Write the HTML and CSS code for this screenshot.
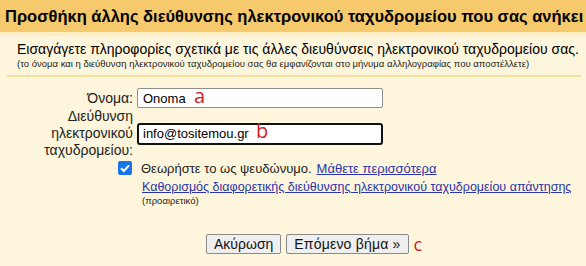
FILE: index.html
```html
<!DOCTYPE html>
<html lang="el">
<head>
    <meta charset="UTF-8">
    <title>Προσθήκη διεύθυνσης</title>
    <link rel="stylesheet" href="styles.css">
</head>
<body>
    <div class="dialog">
        <div class="dialog-title">Προσθήκη άλλης διεύθυνσης ηλεκτρονικού ταχυδρομείου που σας ανήκει</div>

        <div class="dialog-body">
            <div class="intro">
                <div class="intro-main">Εισαγάγετε πληροφορίες σχετικά με τις άλλες διευθύνσεις ηλεκτρονικού ταχυδρομείου σας.</div>
                <div class="intro-note">(το όνομα και η διεύθυνση ηλεκτρονικού ταχυδρομείου σας θα εμφανίζονται στο μήνυμα αλληλογραφίας που αποστέλλετε)</div>
            </div>

            <form class="alias-form">
                <div class="form-row">
                    <label for="name">Όνομα:</label>
                    <div class="field">
                        <input type="text" id="name" value="Onoma">
                        <span class="mark mark-a">a</span>
                    </div>
                </div>

                <div class="form-row row-email">
                    <label for="email">Διεύθυνση<br>ηλεκτρονικού<br>ταχυδρομείου:</label>
                    <div class="field">
                        <input type="text" id="email" class="focused" value="info@tositemou.gr">
                        <span class="mark mark-b">b</span>
                    </div>
                </div>

                <div class="options">
                    <div class="alias-check">
                        <span class="checkbox">
                            <svg width="14" height="14" viewBox="0 0 14 14">
                                <rect x="0" y="0" width="14" height="14" rx="2" fill="#1a73e8"/>
                                <path d="M3 7.2 L5.8 10 L11 4.3" fill="none" stroke="white" stroke-width="2"/>
                            </svg>
                        </span>
                        <span>Θεωρήστε το ως ψευδώνυμο.</span>
                        <a href="#">Μάθετε περισσότερα</a>
                    </div>
                    <a href="#" class="reply-link">Καθορισμός διαφορετικής διεύθυνσης ηλεκτρονικού ταχυδρομείου απάντησης</a>
                    <div class="optional">(προαιρετικό)</div>
                </div>

                <div class="actions">
                    <button type="button">Ακύρωση</button>
                    <button type="button" class="next-btn">Επόμενο βήμα »</button>
                    <span class="mark mark-c">c</span>
                </div>
            </form>
        </div>
    </div>
</body>
</html>
```

FILE: styles.css
```css
* {
    margin: 0;
    padding: 0;
    box-sizing: border-box;
}

body {
    font-family: Arial, 'Liberation Sans', sans-serif;
    background-color: #fef6dc;
    width: 586px;
    height: 266px;
    overflow: hidden;
}

.dialog-title {
    height: 32px;
    padding: 7px 0 0 5px;
    background-color: #f6c96c;
    color: #000;
    font-size: 16.5px;
    font-weight: bold;
    white-space: nowrap;
}

.dialog-body {
    border-top: 4px solid #fdeec3;
}

.intro {
    margin: 0 5px 0 7px;
    padding: 4px 0 5px 10px;
    border-bottom: 2px solid #f3e09a;
}

.intro-main {
    font-size: 14px;
    line-height: 18px;
    white-space: nowrap;
}

.intro-note {
    font-size: 9.5px;
    line-height: 12px;
    color: #222;
    white-space: nowrap;
}

.alias-form {
    padding-top: 11px;
}

.form-row {
    display: flex;
    align-items: center;
}

.form-row label {
    width: 137px;
    padding-right: 4px;
    text-align: right;
    font-size: 14px;
    line-height: 17px;
    color: #222;
}

.field {
    position: relative;
}

.field input {
    width: 246px;
    height: 20px;
    padding: 0 5px;
    border: 1px solid #8f8f8f;
    border-radius: 2px;
    background: white;
    font-family: Arial, 'Liberation Sans', sans-serif;
    font-size: 13px;
    color: #000;
}

.field input.focused {
    height: 22px;
    border: 2px solid #111;
    border-radius: 3px;
    padding: 0 4px;
}

.mark {
    position: absolute;
    top: -4px;
    color: #d01f1f;
    font-family: 'Open Sans', sans-serif;
    font-size: 20px;
    line-height: 24px;
}

.mark-a {
    left: 57px;
}

.mark-b {
    left: 119px;
}

.options {
    padding-left: 118px;
    font-size: 13px;
    color: #222;
}

.alias-check {
    display: flex;
    align-items: center;
    gap: 5px;
    height: 18px;
}

.checkbox {
    display: inline-flex;
    width: 14px;
    height: 14px;
    margin-right: 4px;
}

.options a {
    color: #2b33a8;
}

.reply-link {
    display: block;
    margin: 3px 0 0 24px;
    font-size: 12.5px;
    line-height: 15px;
    white-space: nowrap;
}

.optional {
    margin-left: 24px;
    font-size: 9.5px;
    line-height: 11px;
}

.actions {
    display: flex;
    align-items: center;
    gap: 5px;
    margin: 26px 0 0 206px;
}

.actions button {
    height: 20px;
    padding: 0 7px;
    border: 1px solid #8a8a8a;
    border-radius: 2px;
    background: #efefef;
    font-family: Arial, 'Liberation Sans', sans-serif;
    font-size: 14px;
    color: #111;
}

.next-btn {
    font-weight: 500;
    letter-spacing: 0.2px;
}

.mark-c {
    position: static;
    font-size: 18px;
}
```
